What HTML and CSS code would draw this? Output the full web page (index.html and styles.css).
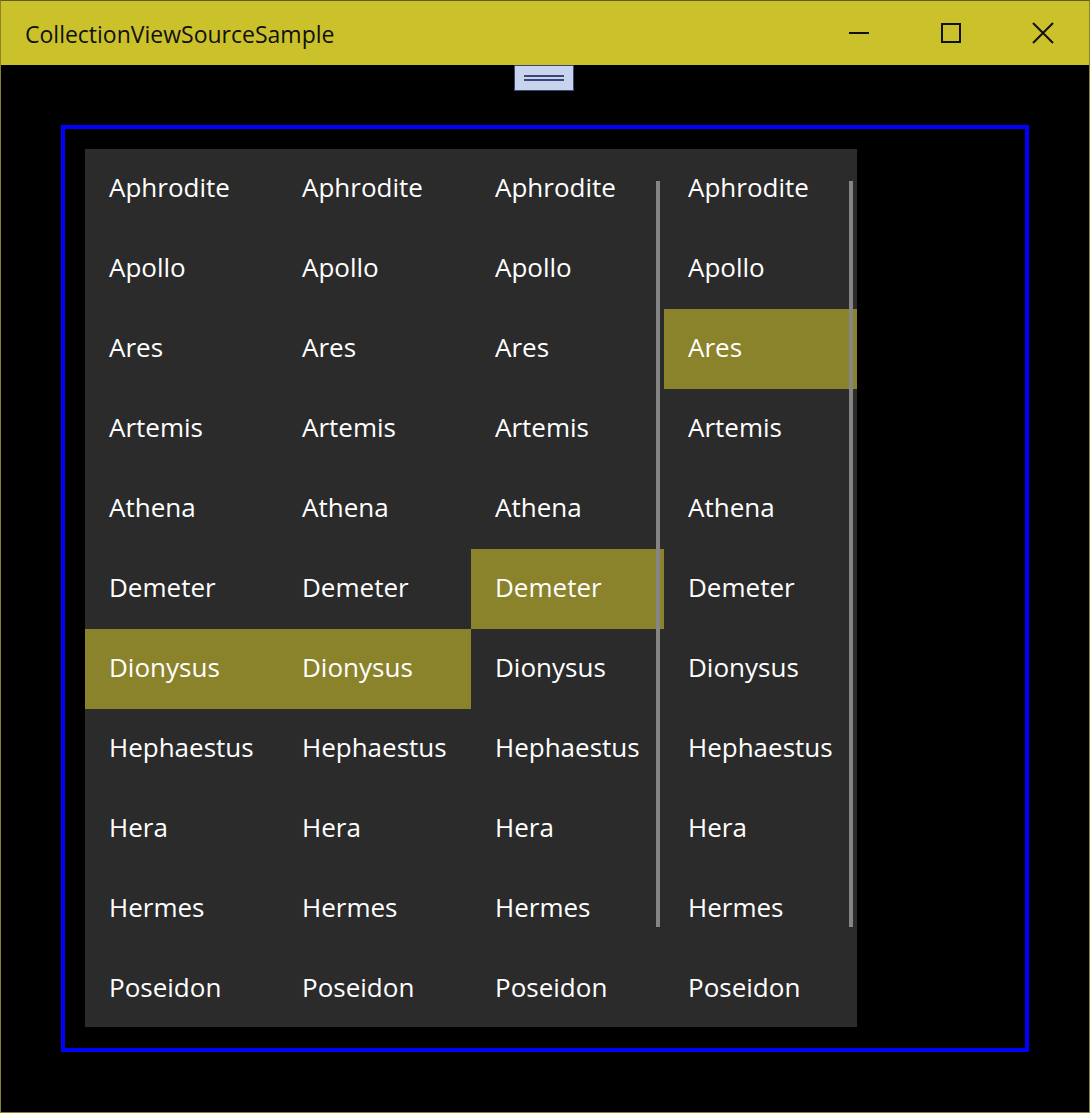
FILE: index.html
```html
<!DOCTYPE html>
<html>
<head>
<meta charset="utf-8">
<link rel="stylesheet" href="styles.css">
</head>
<body>
<div class="window">
  <div class="titlebar">
    <div class="title">CollectionViewSourceSample</div>
    <div class="caption-buttons">
      <div class="cbtn">
        <svg width="22" height="22" viewBox="0 0 22 22"><line x1="1" y1="11" x2="21" y2="11" stroke="#111" stroke-width="2"/></svg>
      </div>
      <div class="cbtn">
        <svg width="22" height="22" viewBox="0 0 22 22"><rect x="2" y="2" width="18" height="18" fill="none" stroke="#111" stroke-width="2"/></svg>
      </div>
      <div class="cbtn">
        <svg width="22" height="22" viewBox="0 0 22 22"><path d="M1 1 L21 21 M21 1 L1 21" stroke="#111" stroke-width="2"/></svg>
      </div>
    </div>
  </div>
  <div class="content">
    <div class="grip"><span class="grip-line"></span><span class="grip-line"></span></div>
    <div class="frame">
      <div class="panel">
        <div class="col">
          <div class="item">Aphrodite</div>
          <div class="item">Apollo</div>
          <div class="item">Ares</div>
          <div class="item">Artemis</div>
          <div class="item">Athena</div>
          <div class="item">Demeter</div>
          <div class="item sel">Dionysus</div>
          <div class="item">Hephaestus</div>
          <div class="item">Hera</div>
          <div class="item">Hermes</div>
          <div class="item">Poseidon</div>
        </div>
        <div class="col">
          <div class="item">Aphrodite</div>
          <div class="item">Apollo</div>
          <div class="item">Ares</div>
          <div class="item">Artemis</div>
          <div class="item">Athena</div>
          <div class="item">Demeter</div>
          <div class="item sel">Dionysus</div>
          <div class="item">Hephaestus</div>
          <div class="item">Hera</div>
          <div class="item">Hermes</div>
          <div class="item">Poseidon</div>
        </div>
        <div class="col">
          <div class="item">Aphrodite</div>
          <div class="item">Apollo</div>
          <div class="item">Ares</div>
          <div class="item">Artemis</div>
          <div class="item">Athena</div>
          <div class="item sel">Demeter</div>
          <div class="item">Dionysus</div>
          <div class="item">Hephaestus</div>
          <div class="item">Hera</div>
          <div class="item">Hermes</div>
          <div class="item">Poseidon</div>
          <div class="scroll"></div>
        </div>
        <div class="col">
          <div class="item">Aphrodite</div>
          <div class="item">Apollo</div>
          <div class="item sel">Ares</div>
          <div class="item">Artemis</div>
          <div class="item">Athena</div>
          <div class="item">Demeter</div>
          <div class="item">Dionysus</div>
          <div class="item">Hephaestus</div>
          <div class="item">Hera</div>
          <div class="item">Hermes</div>
          <div class="item">Poseidon</div>
          <div class="scroll"></div>
        </div>
      </div>
    </div>
  </div>
</div>
</body>
</html>
```

FILE: styles.css
```css
html, body {
  margin: 0;
  padding: 0;
  background: #000;
}

.window {
  width: 1090px;
  height: 1113px;
  box-sizing: border-box;
  border: 1px solid #8a8326;
  border-top-color: #5f5b1e;
  background: #000;
  display: flex;
  flex-direction: column;
  overflow: hidden;
}

.titlebar {
  height: 64px;
  flex: none;
  background: #cbc12a;
  display: flex;
  align-items: center;
}

.title {
  flex: 1;
  padding-left: 24px;
  font-family: "Open Sans", "Noto Sans", sans-serif;
  font-size: 23px;
  color: #111;
  margin-top: 1px;
}

.caption-buttons {
  display: flex;
  height: 100%;
}

.cbtn {
  width: 92px;
  height: 100%;
  display: flex;
  align-items: center;
  justify-content: center;
}

.content {
  flex: 1;
  display: flex;
  flex-direction: column;
}

.grip {
  align-self: center;
  margin-left: -3px;
  width: 58px;
  height: 24px;
  background: #c8d3ee;
  border: 1px solid #3b4578;
  display: flex;
  flex-direction: column;
  align-items: center;
  justify-content: center;
  gap: 2px;
}

.grip-line {
  display: block;
  width: 40px;
  height: 2px;
  background: #3b4578;
}

.frame {
  margin: 34px 0 0 60px;
  width: 920px;
  height: 879px;
  border: 4px solid #0000ff;
  padding: 20px;
  box-sizing: content-box;
}

.panel {
  width: 772px;
  height: 878px;
  background: #2b2b2b;
  display: grid;
  grid-template-columns: repeat(4, 193px);
  overflow: hidden;
}

.col {
  position: relative;
  display: flex;
  flex-direction: column;
}

.item {
  height: 80px;
  flex: none;
  display: flex;
  align-items: center;
  padding-left: 24px;
  padding-bottom: 5px;
  box-sizing: border-box;
  font-family: "Open Sans", "Noto Sans", sans-serif;
  font-size: 26px;
  color: #fff;
  white-space: nowrap;
}

.item.sel {
  background: #8b832b;
}

.scroll {
  position: absolute;
  right: 4px;
  top: 32px;
  width: 4px;
  height: 746px;
  background: #858585;
}
```
